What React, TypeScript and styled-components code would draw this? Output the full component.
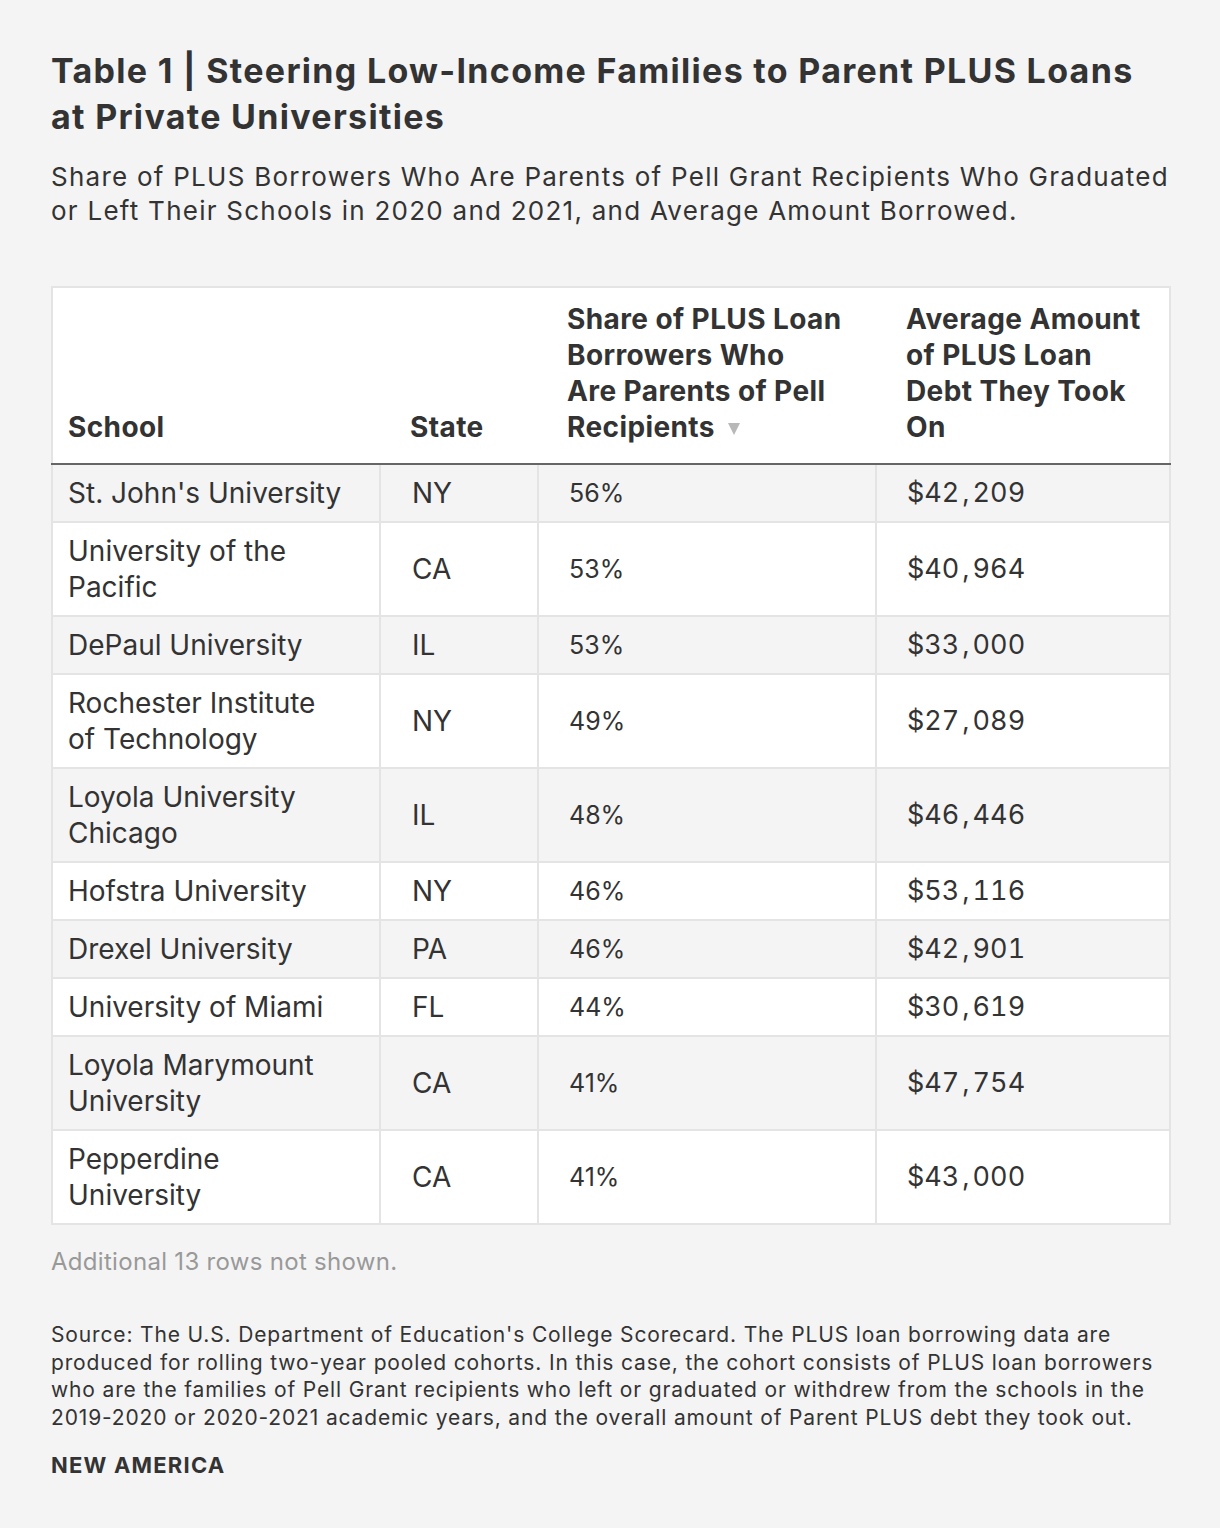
import React from "react";
import styled, { createGlobalStyle } from "styled-components";

const Global = createGlobalStyle`
  html, body { margin: 0; padding: 0; background: #f4f4f4; }
  body { font-family: Inter, "Noto Sans", sans-serif; color: #333; }
`;

const Page = styled.div`
  width: 1220px;
  box-sizing: border-box;
  padding: 48px 51px 40px 51px;
  background: #f4f4f4;
`;

const Title = styled.h1`
  margin: 0;
  font-size: 34px;
  line-height: 46px;
  font-weight: 700;
  color: #333;
  letter-spacing: 1.3px;
`;

const Subtitle = styled.p`
  margin: 20px 0 0 0;
  font-size: 26px;
  line-height: 34px;
  font-weight: 400;
  color: #333;
  letter-spacing: 1.25px;
`;

const Table = styled.table`
  margin-top: 58px;
  width: 1118px;
  table-layout: fixed;
  border-collapse: collapse;
  background: #fff;
  border: 2px solid #e4e4e4;
`;

const Col = styled.col<{ $w: number }>`
  width: ${(p) => p.$w}px;
`;

const Th = styled.th<{ $pl: number }>`
  text-align: left;
  vertical-align: bottom;
  white-space: nowrap;
  font-size: 28px;
  line-height: 36px;
  font-weight: 700;
  color: #333;
  letter-spacing: 0.4px;
  padding: 13px 8px 18px ${(p) => p.$pl}px;
  border-bottom: 2px solid #666;
`;

const Row = styled.tr<{ $odd: boolean }>`
  background: ${(p) => (p.$odd ? "#f4f4f4" : "#fff")};
`;

const Td = styled.td<{ $size?: number; $pl: number; $tab?: boolean }>`
  font-size: ${(p) => p.$size ?? 28}px;
  line-height: 36px;
  color: #333;
  white-space: pre-line;
  padding: 10px 8px 10px ${(p) => p.$pl}px;
  border: 2px solid #e4e4e4;
  border-top: none;
  vertical-align: middle;
  font-variant-numeric: ${(p) => (p.$tab ? "tabular-nums" : "normal")};
`;

const Comma = styled.span`
  margin: 0 3px;
`;

const Arrow = styled.svg`
  width: 14px;
  height: 14px;
  margin-left: 12px;
  vertical-align: 1px;
`;

const Note = styled.p`
  margin: 22px 0 0 0;
  font-size: 24px;
  line-height: 30px;
  color: #999;
  letter-spacing: 0.3px;
`;

const Source = styled.p`
  margin: 44px 0 0 0;
  font-size: 21px;
  line-height: 27.7px;
  color: #333;
  letter-spacing: 0.85px;
`;

const Brand = styled.div`
  margin-top: 20px;
  font-size: 22px;
  font-weight: 700;
  color: #333;
  letter-spacing: 1.2px;
`;

const rows: [string, string, string, string][] = [
  ["St. John's University", "NY", "56%", "$42,209"],
  ["University of the\nPacific", "CA", "53%", "$40,964"],
  ["DePaul University", "IL", "53%", "$33,000"],
  ["Rochester Institute\nof Technology", "NY", "49%", "$27,089"],
  ["Loyola University\nChicago", "IL", "48%", "$46,446"],
  ["Hofstra University", "NY", "46%", "$53,116"],
  ["Drexel University", "PA", "46%", "$42,901"],
  ["University of Miami", "FL", "44%", "$30,619"],
  ["Loyola Marymount\nUniversity", "CA", "41%", "$47,754"],
  ["Pepperdine\nUniversity", "CA", "41%", "$43,000"],
];

function Money({ v }: { v: string }) {
  const [a, b] = v.split(",");
  return (
    <>
      {a}
      <Comma>,</Comma>
      {b}
    </>
  );
}

export default function App() {
  return (
    <Page>
      <Global />
      <Title>
        Table 1 | Steering Low-Income Families to Parent PLUS Loans at Private Universities
      </Title>
      <Subtitle>
        Share of PLUS Borrowers Who Are Parents of Pell Grant Recipients Who Graduated or Left
        Their Schools in 2020 and 2021, and Average Amount Borrowed.
      </Subtitle>
      <Table>
        <colgroup>
          <Col $w={328} />
          <Col $w={158} />
          <Col $w={338} />
          <Col $w={294} />
        </colgroup>
        <thead>
          <tr>
            <Th $pl={15}>School</Th>
            <Th $pl={30}>State</Th>
            <Th $pl={29}>
              Share of PLUS Loan
              <br />
              Borrowers Who
              <br />
              Are Parents of Pell
              <br />
              Recipients
              <Arrow viewBox="0 0 14 14" aria-hidden="true">
                <path d="M1 1 L13 1 L7 13 Z" fill="#b8b8b8" />
              </Arrow>
            </Th>
            <Th $pl={30}>
              Average Amount
              <br />
              of PLUS Loan
              <br />
              Debt They Took
              <br />
              On
            </Th>
          </tr>
        </thead>
        <tbody>
          {rows.map((r, i) => (
            <Row key={r[0]} $odd={i % 2 === 0}>
              <Td $pl={15}>{r[0]}</Td>
              <Td $pl={31}>{r[1]}</Td>
              <Td $pl={30} $size={25}>
                {r[2]}
              </Td>
              <Td $pl={30} $size={27} $tab>
                <Money v={r[3]} />
              </Td>
            </Row>
          ))}
        </tbody>
      </Table>
      <Note>Additional 13 rows not shown.</Note>
      <Source>
        Source: The U.S. Department of Education's College Scorecard. The PLUS loan borrowing data
        are produced for rolling two-year pooled cohorts. In this case, the cohort consists of PLUS
        loan borrowers who are the families of Pell Grant recipients who left or graduated or
        withdrew from the schools in the 2019-2020 or 2020-2021 academic years, and the overall
        amount of Parent PLUS debt they took out.
      </Source>
      <Brand>NEW AMERICA</Brand>
    </Page>
  );
}
